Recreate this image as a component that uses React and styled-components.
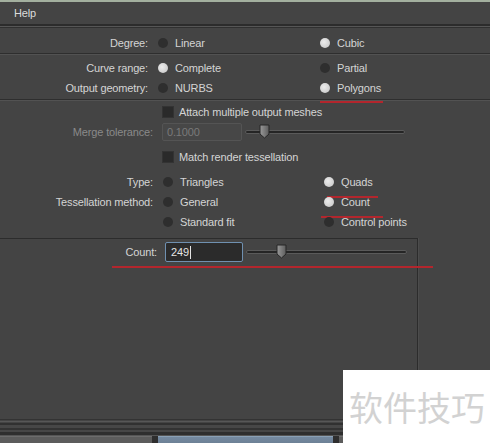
import React from 'react';
import styled, { createGlobalStyle } from 'styled-components';

const GlobalStyle = createGlobalStyle`
  html, body {
    margin: 0;
    background: #444;
  }
  body {
    font-family: "Liberation Sans", Arial, sans-serif;
  }
`

const Slider = ({ width, thumb }) => (
  <StyledSlider style={{ width }}>
    <StyledTrack />
    <StyledThumb style={{ left: thumb }} viewBox="0 0 11 15" width="11" height="15">
      <defs>
        <linearGradient id="thumbFill" x1="0" y1="0" x2="1" y2="0">
          <stop offset="0" stopColor="#9a9a9a" />
          <stop offset="1" stopColor="#5c5c5c" />
        </linearGradient>
      </defs>
      <path d="M1 1 H10 V10 L5.5 14 L1 10 Z" fill="url(#thumbFill)" stroke="#262626" strokeWidth="1" />
    </StyledThumb>
  </StyledSlider>
)

const RadioOption = ({ on, children, width, mark }) => (
  <StyledOption $width={width}>
    <StyledRadio $on={on} />
    {children}
    {mark && <StyledMark style={{ left: mark.left, width: mark.width, top: mark.top }} />}
  </StyledOption>
)

const App = () => {
  return (
    <>
      <GlobalStyle />
      <StyledPage>
        <StyledTopLine />
        <StyledMenuBar>Help</StyledMenuBar>
        <StyledHeavyRule />

        {/* Degree */}
        <StyledSection $top={5} $bottom={0}>
          <StyledRow>
            <StyledLabel $w={148}>Degree:</StyledLabel>
            <RadioOption width={162}>Linear</RadioOption>
            <RadioOption on>Cubic</RadioOption>
          </StyledRow>
        </StyledSection>
        <StyledRule />

        {/* Range / geometry */}
        <StyledSection $top={3} $bottom={1}>
          <StyledRow>
            <StyledLabel $w={148}>Curve range:</StyledLabel>
            <RadioOption on width={162}>Complete</RadioOption>
            <RadioOption>Partial</RadioOption>
          </StyledRow>
          <StyledRow>
            <StyledLabel $w={148}>Output geometry:</StyledLabel>
            <RadioOption width={162}>NURBS</RadioOption>
            <RadioOption on mark={{ left: 0, width: 63, top: 19 }}>Polygons</RadioOption>
          </StyledRow>
        </StyledSection>
        <StyledRule />

        {/* Polygon options */}
        <StyledSection $top={1} $bottom={6}>
          <StyledRow>
            <StyledLabel $w={153} />
            <StyledCheck />
            Attach multiple output meshes
          </StyledRow>
          <StyledRow>
            <StyledLabel $w={153} $dim>Merge tolerance:</StyledLabel>
            <StyledField $dim>0.1000</StyledField>
            <Slider width={160} thumb={14} />
          </StyledRow>
          <StyledRow $gap={5}>
            <StyledLabel $w={153} />
            <StyledCheck />
            Match render tessellation
          </StyledRow>
          <StyledRow $gap={5}>
            <StyledLabel $w={153}>Type:</StyledLabel>
            <RadioOption width={161}>Triangles</RadioOption>
            <RadioOption on mark={{ left: 3, width: 51, top: 20 }}>Quads</RadioOption>
          </StyledRow>
          <StyledRow>
            <StyledLabel $w={153}>Tessellation method:</StyledLabel>
            <RadioOption width={161}>General</RadioOption>
            <RadioOption on mark={{ left: -3, width: 62, top: 20 }}>Count</RadioOption>
          </StyledRow>
          <StyledRow>
            <StyledLabel $w={153} />
            <RadioOption width={161}>Standard fit</RadioOption>
            <RadioOption>Control points</RadioOption>
          </StyledRow>
        </StyledSection>

        {/* Count panel */}
        <StyledPanel>
          <StyledRow $mark>
            <StyledLabel $w={157} $pad={8}>Count:</StyledLabel>
            <StyledField $focus>249<StyledCaret /></StyledField>
            <Slider width={161} thumb={30} />
          </StyledRow>
        </StyledPanel>

        <StyledFooterLines />
        <StyledButtons>
          <StyledButton $w={152} />
          <StyledButton $w={175} $active />
          <StyledButton />
        </StyledButtons>

        <StyledWatermark>软件技巧</StyledWatermark>
      </StyledPage>
    </>
  );
}

const StyledPage = styled.div`
  position: relative;
  width: 490px;
  height: 443px;
  overflow: hidden;
  background: #444;
  color: #d4d4d4;
  font-size: 11px;
  letter-spacing: -0.15px;
`
const StyledTopLine = styled.div`
  height: 2px;
  background: #a3b09f;
`
const StyledMenuBar = styled.div`
  height: 22px;
  display: flex;
  align-items: center;
  padding-left: 14px;
  color: #dcdcdc;
`
const StyledHeavyRule = styled.div`
  height: 1px;
  background: #565656;
  border-top: 2px solid #2c2c2c;
  border-bottom: 1px solid #303030;
`
const StyledRule = styled.div`
  border-top: 1px solid #2e2e2e;
  border-bottom: 1px solid #525252;
`
const StyledSection = styled.section`
  padding-top: ${props => props.$top}px;
  padding-bottom: ${props => props.$bottom}px;
`
const StyledRow = styled.div`
  position: relative;
  display: flex;
  align-items: center;
  height: 20px;
  margin-top: ${props => props.$gap || 0}px;
  white-space: nowrap;
  ${props => props.$mark && `
    &::after {
      content: '';
      position: absolute;
      left: 112px;
      width: 321px;
      top: 24px;
      height: 2px;
      background: #b3262d;
    }
  `}
`
const StyledLabel = styled.span`
  box-sizing: border-box;
  flex: 0 0 auto;
  width: ${props => props.$w + (props.$pad || 10)}px;
  padding-right: ${props => props.$pad || 10}px;
  text-align: right;
  color: ${props => props.$dim ? '#8a8a8a' : '#d4d4d4'};
`
const StyledOption = styled.span`
  position: relative;
  display: flex;
  align-items: center;
  flex: 0 0 auto;
  width: ${props => props.$width ? `${props.$width}px` : 'auto'};
`
const StyledRadio = styled.span`
  width: 10px;
  height: 10px;
  margin-right: 7px;
  border-radius: 50%;
  background: ${props => props.$on
    ? 'radial-gradient(circle at 40% 40%, #ececec, #c2c2c2)'
    : '#2e2e2e'};
`
const StyledMark = styled.span`
  position: absolute;
  height: 2px;
  background: #b3262d;
`
const StyledCheck = styled.span`
  width: 12px;
  height: 12px;
  margin-left: -1px;
  margin-right: 5px;
  background: #2a2a2a;
  box-shadow: inset 0 0 0 1px #333;
`
const StyledField = styled.span`
  box-sizing: border-box;
  display: flex;
  align-items: center;
  width: ${props => props.$focus ? 78 : 80}px;
  height: ${props => props.$focus ? 20 : 18}px;
  margin-left: ${props => props.$focus ? 0 : -1}px;
  padding-left: ${props => props.$focus ? 5 : 4}px;
  border: 1px solid ${props => props.$focus ? '#6f90b0' : '#545454'};
  border-radius: 2px;
  background: ${props => props.$focus ? '#2b2b2b' : '#474747'};
  color: ${props => props.$focus ? '#e4e4e4' : '#7a7a7a'};
`
const StyledCaret = styled.span`
  width: 1px;
  height: 13px;
  margin-left: 1px;
  background: #e4e4e4;
`
const StyledSlider = styled.span`
  position: relative;
  height: 16px;
  margin-left: 3px;
`
const StyledTrack = styled.span`
  position: absolute;
  left: 0;
  right: 0;
  top: 6px;
  height: 2px;
  border: 1px solid #5a5a5a;
  border-radius: 3px;
  background: #252525;
`
const StyledThumb = styled.svg`
  position: absolute;
  top: 0;
`
const StyledPanel = styled.div`
  box-sizing: border-box;
  width: 418px;
  height: 181px;
  padding-top: 3px;
  border-top: 1px solid #2c2c2c;
  border-right: 1px solid #2c2c2c;
  box-shadow: 1px 0 0 #4c4c4c;
`
const StyledFooterLines = styled.div`
  height: 17px;
  background: linear-gradient(to bottom,
    #333 0, #333 1px,
    #444 1px, #444 2px,
    #575757 2px, #575757 3px,
    #444 3px, #444 4px,
    #313131 4px, #313131 6px,
    #474747 6px, #474747 9px,
    #333 9px, #333 11px,
    #464646 11px, #464646 13px,
    #2e2e2e 13px, #2e2e2e 16px,
    #555 16px, #555 17px);
`
const StyledButtons = styled.div`
  display: flex;
  gap: 6px;
  height: 25px;
  background: #2e2e2e;
`
const StyledButton = styled.div`
  flex: ${props => props.$w ? `0 0 ${props.$w}px` : '1'};
  border-top: 1px solid ${props => props.$active ? '#8aa0b5' : '#6c6c6c'};
  background: ${props => props.$active
    ? 'linear-gradient(to bottom, #7489a0, #5a6877)'
    : '#5c5c5c'};
`
const StyledWatermark = styled.div`
  position: absolute;
  right: 0;
  bottom: 0;
  width: 147px;
  height: 73px;
  box-sizing: border-box;
  padding: 17px 0 0 6px;
  background: #fff;
  color: #d2d2d2;
  font-family: "Noto Sans CJK SC", sans-serif;
  font-size: 34px;
  line-height: 40px;
  letter-spacing: 0;
  white-space: nowrap;
`

export default App;
